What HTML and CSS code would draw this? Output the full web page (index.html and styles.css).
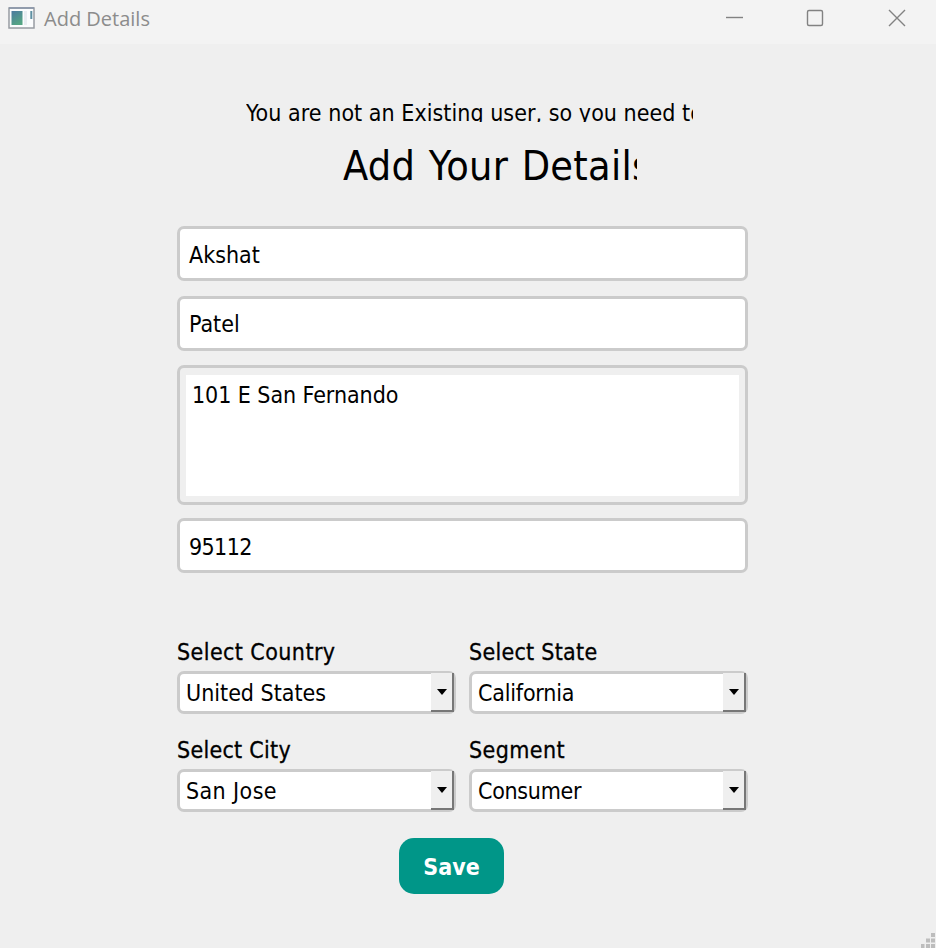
FILE: index.html
```html
<!DOCTYPE html>
<html lang="en">
<head>
<meta charset="utf-8">
<title>Add Details</title>
<link rel="stylesheet" href="styles.css">
</head>
<body>
<header class="titlebar">
  <svg class="app-icon" width="27" height="22" viewBox="0 0 27 22">
    <defs><linearGradient id="pane" x1="0" y1="0" x2="0.5" y2="1"><stop offset="0" stop-color="#4c7aa0"/><stop offset="1" stop-color="#55a584"/></linearGradient></defs>
    <rect x="1" y="1" width="25" height="20" fill="#fbfcfd" stroke="#989ca2" stroke-width="1.5"/>
    <path d="M1 1H26" stroke="#8794a8" stroke-width="1.5"/>
    <rect x="3.5" y="4" width="11" height="14" fill="url(#pane)"/>
    <rect x="16" y="4" width="3" height="14" fill="#e9edf2"/>
    <rect x="22.3" y="4" width="2" height="8" fill="#5e90a2"/>
  </svg>
  <span class="window-title">Add Details</span>
  <svg class="controls" width="184" height="22" viewBox="0 0 184 22" fill="none" stroke="#828282" stroke-width="1.4">
    <path d="M4 10.5H21"/>
    <rect x="85.500" y="3.500" width="15" height="15" rx="1.500"/>
    <path d="M167 3L183 19M183 3L167 19"/>
  </svg>
</header>
<main class="form">
  <p class="notice">You are not an Existing user, so you need to</p>
  <h1 class="heading">Add Your Details</h1>
  <div class="field"><span>Akshat</span></div>
  <div class="field"><span>Patel</span></div>
  <div class="area"><div class="area-inner"><span>101 E San Fernando</span></div></div>
  <div class="field zip"><span>95112</span></div>
  <div class="choices">
    <div class="choice"><label>Select Country</label><div class="combo"><span>United States</span><i class="drop"></i></div></div>
    <div class="choice"><label class="t-state">Select State</label><div class="combo"><span class="t-ca">California</span><i class="drop"></i></div></div>
    <div class="choice"><label class="t-city">Select City</label><div class="combo"><span class="t-sj">San Jose</span><i class="drop"></i></div></div>
    <div class="choice"><label>Segment</label><div class="combo"><span class="t-consumer">Consumer</span><i class="drop"></i></div></div>
  </div>
  <button class="save">Save</button>
</main>
<svg class="grip" width="15" height="15" viewBox="0 0 15 15" fill="#bdbdbd">
  <path d="M10 0h4v4h-4zM5 5.500h4v4H5zM10 5.500h4v4h-4zM0 11h3.500v4H0zM5 11h4v4H5zM10 11h4v4h-4z"/>
</svg>
</body>
</html>
```
FILE: styles.css
```css
* { box-sizing: border-box; }
body {
  margin: 0;
  height: 948px;
  overflow: hidden;
  background: #efefef;
  color: #000;
  font-family: "DejaVu Sans Condensed", "DejaVu Sans", sans-serif;
  font-stretch: condensed;
  font-size: 23px;
  white-space: nowrap;
}
.titlebar {
  display: flex;
  align-items: flex-start;
  height: 44px;
  padding: 7px 30px 0 8px;
  background: #f3f3f3;
}
.window-title {
  margin-left: 9px;
  line-height: 24px;
  font-family: "Open Sans", "Noto Sans", sans-serif;
  font-stretch: normal;
  font-size: 20px;
  color: #8c8c8c;
}
.controls { margin-left: auto; }
.form {
  display: flex;
  flex-direction: column;
  width: 571px;
  margin-left: 177px;
  padding-top: 58px;
}
.notice {
  width: 447px;
  height: 20px;
  margin: 0 0 0 69px;
  overflow: hidden;
  line-height: 22px;
  letter-spacing: 0.04px;
}
.heading {
  width: 294px;
  height: 44px;
  margin: 22px 0 0 166px;
  overflow: hidden;
  font-size: 41px;
  font-weight: 400;
  line-height: 45px;
  letter-spacing: 0.3px;
  word-spacing: 1.5px;
}
.field {
  height: 55px;
  padding: 0 9px;
  border: 3px solid #cbcbcb;
  border-radius: 7px;
  background: #fff;
  line-height: 53px;
}
.heading + .field { margin-top: 38px; }
.field + .field { margin-top: 15px; line-height: 51px; }
.area {
  height: 140px;
  margin-top: 14px;
  padding: 7px 6px;
  border: 3px solid #cbcbcb;
  border-radius: 7px;
}
.area-inner {
  height: 121px;
  padding: 0 6px;
  background: #fff;
  line-height: 41px;
  letter-spacing: -0.06px;
}
.zip { margin-top: 13px; letter-spacing: -0.6px; }
.choices {
  display: grid;
  grid-template-columns: 279px 279px;
  gap: 21px 13px;
  margin-top: 64px;
}
.choice { display: flex; flex-direction: column; height: 77px; }
.choice label {
  height: 34px;
  line-height: 30px;
  letter-spacing: 0.42px;
  -webkit-text-stroke: 0.3px #000;
}
.choice label.t-state, .choice label.t-city { letter-spacing: 0.27px; }
.combo {
  display: flex;
  height: 43px;
  padding-left: 6px;
  border: 3px solid #cbcbcb;
  border-radius: 7px;
  background: #fff;
  line-height: 38px;
}
.t-ca { letter-spacing: -0.2px; }
.t-sj { letter-spacing: 0.4px; }
.t-consumer { letter-spacing: -0.3px; }
.drop {
  display: flex;
  align-items: center;
  justify-content: center;
  width: 23px;
  height: 39px;
  margin: -1px -1px 0 auto;
  background: #efefef;
  border: solid #777;
  border-width: 0 2px 2px 0;
}
.drop::before {
  content: "";
  border: 5px solid transparent;
  border-top: 6px solid #000;
  border-bottom: 0;
}
.save {
  width: 105px;
  height: 56px;
  margin: 26px 0 0 222px;
  padding: 2px 0 0;
  border: 0;
  border-radius: 15px;
  background: #009688;
  color: #fff;
  font: 700 23px "DejaVu Sans Condensed", "DejaVu Sans", sans-serif;
  font-stretch: condensed;
}
.grip { position: absolute; right: 0; bottom: 0; }
```
